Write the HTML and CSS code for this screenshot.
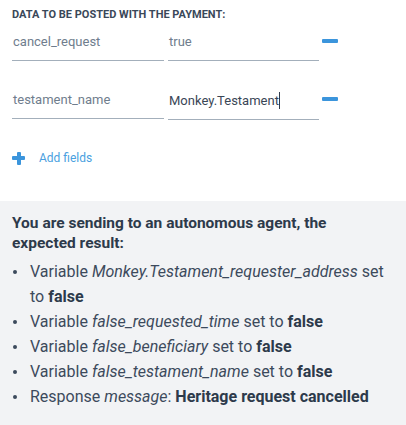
FILE: index.html
```html
<!DOCTYPE html>
<html lang="en">

<head>
    <meta charset="UTF-8">
    <meta name="viewport" content="width=device-width, initial-scale=1.0">
    <title>Payment data</title>
    <link rel="stylesheet" href="styles.css">
</head>

<body>
    <div class="payment-data">
        <h4 class="section-title">Data to be posted with the payment:</h4>
        <div class="field-row">
            <div class="field">cancel_request</div>
            <div class="field field-value">true</div>
            <span class="remove-btn"></span>
        </div>
        <div class="field-row">
            <div class="field">testament_name</div>
            <div class="field field-value filled">Monkey.Testament<span class="caret"></span></div>
            <span class="remove-btn"></span>
        </div>
        <div class="add-fields">
            <span class="plus-icon"></span>
            <span class="add-label">Add fields</span>
        </div>
    </div>
    <div class="expected">
        <p class="expected-title">You are sending to an autonomous agent, the expected result:</p>
        <ul class="expected-list">
            <li>Variable <em>Monkey.Testament_requester_address</em> set to <strong>false</strong></li>
            <li>Variable <em>false_requested_time</em> set to <strong>false</strong></li>
            <li>Variable <em>false_beneficiary</em> set to <strong>false</strong></li>
            <li>Variable <em>false_testament_name</em> set to <strong>false</strong></li>
            <li>Response <em>message</em>: <strong>Heritage request cancelled</strong></li>
        </ul>
    </div>
</body>

</html>
```

FILE: styles.css
```css
body {
    font-family: Roboto, "Liberation Sans", sans-serif;
    background-color: #fff;
    margin: 0;
    padding: 0;
    color: #2f3c4d;
}

.payment-data {
    padding: 8px 12px 0;
    height: 193px;
}

.section-title {
    margin: 0;
    font-size: 11px;
    line-height: 14px;
    font-weight: 700;
    text-transform: uppercase;
    color: #3a4859;
}

.field-row {
    display: flex;
    align-items: flex-start;
    margin-top: 6px;
}

.field-row + .field-row {
    margin-top: 25px;
}

.field {
    width: 150px;
    padding: 6px 1px 10px;
    font-size: 13px;
    line-height: 16px;
    color: #6f7d8d;
    border-bottom: 1px solid #a3afbb;
}

.field-value {
    width: 149px;
    margin-left: 4px;
}

.filled {
    color: #3a4656;
}

.caret {
    display: inline-block;
    width: 1px;
    height: 17px;
    background-color: #2f3c4d;
    vertical-align: -4px;
}

.remove-btn {
    width: 16px;
    height: 4px;
    margin: 11px 0 0 3px;
    background-color: #3b95dc;
    border-radius: 1px;
}

.add-fields {
    display: flex;
    align-items: center;
    margin-top: 31px;
}

.plus-icon {
    position: relative;
    width: 13px;
    height: 13px;
}

.plus-icon::before,
.plus-icon::after {
    content: "";
    position: absolute;
    background-color: #3b95dc;
    border-radius: 1px;
}

.plus-icon::before {
    left: 0;
    top: 4.5px;
    width: 13px;
    height: 4px;
}

.plus-icon::after {
    left: 4.5px;
    top: 0;
    width: 4px;
    height: 13px;
}

.add-label {
    margin-left: 14px;
    font-size: 12px;
    color: #4a9fe0;
}

.expected {
    background-color: #f2f3f5;
    padding: 12px 12px 20px;
    min-height: 190px;
}

.expected-title {
    margin: 0;
    font-size: 15.5px;
    line-height: 20px;
    font-weight: 700;
    color: #2d3a4b;
}

.expected-list {
    list-style: none;
    margin: 6px 0 0;
    padding: 0;
    font-size: 16px;
    line-height: 25px;
    color: #3c4a5c;
}

.expected-list li {
    position: relative;
    padding-left: 18px;
}

.expected-list li::before {
    content: "";
    position: absolute;
    left: 1px;
    top: 11px;
    width: 4px;
    height: 4px;
    border-radius: 50%;
    background-color: #3c4a5c;
}

.expected-list strong {
    color: #2d3a4b;
}
```
